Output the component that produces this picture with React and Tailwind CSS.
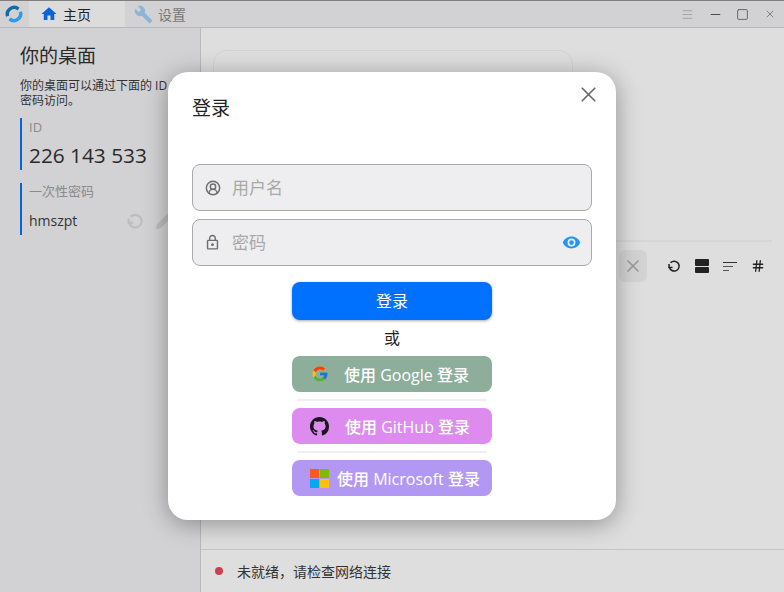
import { X, Minus, Square, Menu, Pencil, CircleUserRound, Hash } from "lucide-react";

const GoogleLogo = () => (
  <svg viewBox="0 0 48 48" className="w-[18px] h-[18px]">
    <path fill="#FFC107" d="M43.6 20.1H42V20H24v8h11.3C33.7 32.7 29.2 36 24 36c-6.6 0-12-5.4-12-12s5.4-12 12-12c3.1 0 5.8 1.2 8 3l5.7-5.7C34 6.1 29.3 4 24 4 13 4 4 13 4 24s9 20 20 20 20-9 20-20c0-1.3-.1-2.7-.4-3.9z" />
    <path fill="#FF3D00" d="M6.3 14.7l6.6 4.8C14.7 15.1 19 12 24 12c3.1 0 5.8 1.2 8 3l5.7-5.7C34 6.1 29.3 4 24 4 16.3 4 9.7 8.3 6.3 14.7z" />
    <path fill="#4CAF50" d="M24 44c5.2 0 9.9-2 13.4-5.2l-6.2-5.2C29.2 35.1 26.7 36 24 36c-5.2 0-9.6-3.3-11.3-8l-6.5 5C9.5 39.6 16.2 44 24 44z" />
    <path fill="#1976D2" d="M43.6 20.1H42V20H24v8h11.3c-.8 2.2-2.2 4.2-4.1 5.6l6.2 5.2C37 39.2 44 34 44 24c0-1.3-.1-2.7-.4-3.9z" />
  </svg>
);

const GithubLogo = () => (
  <svg viewBox="0 0 16 16" className="w-[19px] h-[19px]" fill="#1b1520">
    <path d="M8 0C3.58 0 0 3.58 0 8c0 3.54 2.29 6.53 5.47 7.59.4.07.55-.17.55-.38 0-.19-.01-.82-.01-1.49-2.01.37-2.53-.49-2.69-.94-.09-.23-.48-.94-.82-1.13-.28-.15-.68-.52-.01-.53.63-.01 1.08.58 1.23.82.72 1.21 1.87.87 2.33.66.07-.52.28-.87.51-1.07-1.78-.2-3.64-.89-3.64-3.95 0-.87.31-1.59.82-2.15-.08-.2-.36-1.02.08-2.12 0 0 .67-.21 2.2.82.64-.18 1.32-.27 2-.27s1.36.09 2 .27c1.53-1.04 2.2-.82 2.2-.82.44 1.1.16 1.92.08 2.12.51.56.82 1.27.82 2.15 0 3.07-1.87 3.75-3.65 3.95.29.25.54.73.54 1.48 0 1.07-.01 1.93-.01 2.2 0 .21.15.46.55.38A8.01 8.01 0 0 0 16 8c0-4.42-3.58-8-8-8z" />
  </svg>
);

const MicrosoftLogo = () => (
  <div className="grid grid-cols-2 gap-px w-[19px] h-[19px] shrink-0">
    <div className="bg-[#ff5722]" />
    <div className="bg-[#7fba00]" />
    <div className="bg-[#03a9f4]" />
    <div className="bg-[#ffc107]" />
  </div>
);

const LogoMark = () => (
  <svg viewBox="0 0 24 24" className="w-[18px] h-[18px]" fill="none" strokeWidth="4.5">
    <path d="M3.5 15A9 9 0 0 1 18 5.5" stroke="#0f6aa8" />
    <path d="M20.5 9A9 9 0 0 1 6 18.5" stroke="#2f9ae8" />
  </svg>
);

const ReloadIcon = ({ className, strokeWidth }) => (
  <svg viewBox="0 0 24 24" className={className} fill="none" stroke="currentColor" strokeWidth={strokeWidth}>
    <path d="M6 6.5A8.5 8.5 0 1 1 4 14" />
    <path d="M3.5 8.5v6h6" />
  </svg>
);

const SocialButton = ({ color, icon, label, iconBox }) => (
  <div className={`h-9 w-[200px] rounded-lg flex items-center text-white text-[16px] font-medium ${color}`}>
    <div className={`flex shrink-0 ${iconBox}`}>{icon}</div>
    <span className="whitespace-nowrap pt-[2px]">{label}</span>
  </div>
);

const LoginModal = () => (
  <div className="absolute left-[168px] top-[72px] w-[448px] h-[448px] bg-white rounded-[20px] shadow-[0_4px_24px_rgba(0,0,0,0.35)] flex flex-col px-6 pt-6">
    <X className="absolute right-[15px] top-[10px] w-[25px] h-[25px] text-[#666666]" strokeWidth={1.6} />
    <div className="text-[19px] leading-6 text-[#222222]">登录</div>
    <div className="mt-[44px] h-[47px] rounded-lg border border-[#a9a9a9] bg-[#eeeef0] flex items-center pl-[11px] text-[17px] text-[#a8a8a8]">
      <CircleUserRound className="w-4 h-4 ml-px text-[#6e6e6e]" strokeWidth={2.2} />
      <span className="ml-[11px]">用户名</span>
    </div>
    <div className="mt-2 h-[47px] rounded-lg border border-[#a9a9a9] bg-[#eeeef0] flex items-center pl-[11px] pr-[10px] text-[17px] text-[#a8a8a8]">
      <svg viewBox="0 0 24 24" className="w-[17px] h-[17px]" fill="#6e6e6e">
        <path d="M18 8h-1V6c0-2.76-2.24-5-5-5S7 3.24 7 6v2H6c-1.1 0-2 .9-2 2v10c0 1.1.9 2 2 2h12c1.1 0 2-.9 2-2V10c0-1.1-.9-2-2-2zM9 6c0-1.66 1.34-3 3-3s3 1.34 3 3v2H9V6zm9 14H6V10h12v10zm-6-3c1.1 0 2-.9 2-2s-.9-2-2-2-2 .9-2 2 .9 2 2 2z" />
      </svg>
      <span className="ml-[11px]">密码</span>
      <svg viewBox="0 0 24 24" className="ml-auto w-[19px] h-[19px]" fill="#2196f3">
        <path d="M12 4.5C7 4.5 2.7 7.6 1 12c1.7 4.4 6 7.5 11 7.5s9.3-3.1 11-7.5c-1.7-4.4-6-7.5-11-7.5zM12 17a5 5 0 1 1 0-10 5 5 0 0 1 0 10zm0-8a3 3 0 1 0 0 6 3 3 0 0 0 0-6z" />
      </svg>
    </div>
    <div className="mt-4 flex flex-col items-center">
      <div className="h-[38px] w-[200px] rounded-lg bg-[#0071ff] text-white text-[16px] flex items-center justify-center shadow-[0_1px_3px_rgba(0,0,0,0.35)]">登录</div>
      <div className="mt-[7px] h-[22px] text-[16px] leading-[22px] text-[#222222]">或</div>
      <div className="mt-[7px]">
        <SocialButton color="bg-[#8cae9b]" iconBox="w-[52px] pl-[19px]" icon={<GoogleLogo />} label="使用 Google 登录" />
      </div>
      <div className="w-[190px] h-0.5 bg-[#efefef] my-[7px]" />
      <SocialButton color="bg-[#de8bf0]" iconBox="w-[53px] pl-[18px]" icon={<GithubLogo />} label="使用 GitHub 登录" />
      <div className="w-[190px] h-0.5 bg-[#efefef] my-[7px]" />
      <SocialButton color="bg-[#b398f3]" iconBox="w-[45px] pl-[18px]" icon={<MicrosoftLogo />} label="使用 Microsoft 登录" />
    </div>
  </div>
);

export default function App() {
  return (
    <div className="relative w-[784px] h-[592px] overflow-hidden flex flex-col bg-[#dedede] text-[#333333] font-['Open_Sans','Noto_Sans_CJK_SC',sans-serif]">
      {/* title bar */}
      <div className="h-[28px] shrink-0 flex items-stretch bg-[#d2d2d4] border-t border-t-[#7f7f7f] border-b border-b-[#b9b9b9]">
        <div className="w-[30px] flex items-center justify-center -ml-px">
          <LogoMark />
        </div>
        <div className="w-[96px] bg-[#dcdcdc] flex items-center pl-[12px] gap-[5px] text-[14px] text-[#222222]">
          <svg viewBox="0 0 24 24" className="w-[18px] h-[18px] -ml-px" fill="#0b63d8">
            <path d="M10 20v-6h4v6h5v-8h3L12 3 2 12h3v8z" />
          </svg>
          <span>主页</span>
        </div>
        <div className="w-[95px] flex items-center pl-[9px] gap-[5px] text-[14px] text-[#777777]">
          <svg viewBox="0 0 24 24" className="w-[19px] h-[19px]" fill="#8fb5d6">
            <path d="M22.7 19l-9.1-9.1c.9-2.3.4-5-1.5-6.9-2-2-5-2.4-7.4-1.3L9 6 6 9 1.6 4.7C.4 7.1.9 10.1 2.9 12.1c1.9 1.9 4.6 2.4 6.9 1.5l9.1 9.1c.4.4 1 .4 1.4 0l2.3-2.3c.5-.4.5-1.1.1-1.4z" />
          </svg>
          <span>设置</span>
        </div>
        <div className="ml-auto flex items-center text-[#666666]">
          <div className="w-[30px] flex justify-center"><Menu className="w-[13px] h-[13px] text-[#999999]" strokeWidth={1.5} /></div>
          <div className="w-[27px] flex justify-center"><Minus className="w-[15px] h-[15px] text-[#444444]" strokeWidth={1.5} /></div>
          <div className="w-[27px] flex justify-center"><Square className="w-[13px] h-[13px]" strokeWidth={1.8} /></div>
          <div className="w-[28px] flex justify-center"><X className="w-[12px] h-[12px]" strokeWidth={1.5} /></div>
        </div>
      </div>

      <div className="flex-1 flex min-h-0">
        {/* left panel */}
        <div className="w-[201px] shrink-0 bg-[#d2d2d4] border-r border-r-[#b9b9b9] pl-5 pt-[16px]">
          <div className="text-[19px] leading-6 text-[#2a2a2a]">你的桌面</div>
          <div className="mt-[10px] text-[12px] leading-[15px] w-[165px] text-[#333333]">你的桌面可以通过下面的 ID 和密码访问。</div>
          <div className="mt-[10px] h-[52px] border-l-2 border-l-[#0b63d8] pl-[7px]">
            <div className="text-[13px] leading-[18px] text-[#8a8a8a]">ID</div>
            <div className="mt-[5px] text-[20.8px] leading-[28px] text-[#2a2a2a]">226 143 533</div>
          </div>
          <div className="mt-[13px] h-[52px] border-l-2 border-l-[#0b63d8] pl-[7px]">
            <div className="text-[13px] leading-[16px] text-[#8a8a8a]">一次性密码</div>
            <div className="mt-[12px] flex items-center text-[14px] leading-[20px] text-[#333333]">
              <span>hmszpt</span>
              <ReloadIcon className="ml-[49px] w-[18px] h-[18px] text-[#bdbdbd]" strokeWidth={3} />
              <Pencil className="ml-[11px] w-[17px] h-[17px] text-[#bdbdbd] fill-[#bdbdbd]" />
            </div>
          </div>
        </div>

        {/* main */}
        <div className="flex-1 flex flex-col min-w-0">
          <div className="flex-1 pl-3 pr-3 pt-[22px] min-h-0">
            <div className="w-[360px] h-[150px] rounded-[14px] border border-[#d4d4d4]" />
            <div className="mt-[40px] h-0.5 w-[559px] bg-[#d6d6d6]" />
            <div className="mt-2 flex items-center justify-end h-[32px] pr-[7px]">
              <div className="w-[28px] h-[32px] rounded-md bg-[#d3d3d3] flex items-center justify-center mr-[20px]">
                <X className="w-5 h-5 text-[#9b9b9b]" strokeWidth={2} />
              </div>
              <div className="flex items-center gap-[14px] text-[#222222]">
                <ReloadIcon className="w-[14px] h-[14px]" strokeWidth={2.6} />
                <div className="w-[14px] h-[14px] flex flex-col gap-px">
                  <div className="flex-1 bg-[#222222] rounded-[1px]" />
                  <div className="flex-1 bg-[#222222] rounded-[1px]" />
                </div>
                <div className="w-[14px] flex flex-col gap-[3px]">
                  <div className="h-px w-[14px] bg-[#333333]" />
                  <div className="h-px w-[10px] bg-[#555555]" />
                  <div className="h-px w-[6px] bg-[#555555]" />
                </div>
                <Hash className="w-[14px] h-[14px]" strokeWidth={2.2} />
              </div>
            </div>
          </div>
          <div className="h-[43px] shrink-0 border-t border-t-[#c6c6c6] flex items-center pl-[14px] text-[14px] text-[#333333]">
            <div className="w-2 h-2 rounded-full bg-[#c9414f]" />
            <span className="ml-[14px]">未就绪，请检查网络连接</span>
          </div>
        </div>
      </div>

      <LoginModal />
    </div>
  );
}
